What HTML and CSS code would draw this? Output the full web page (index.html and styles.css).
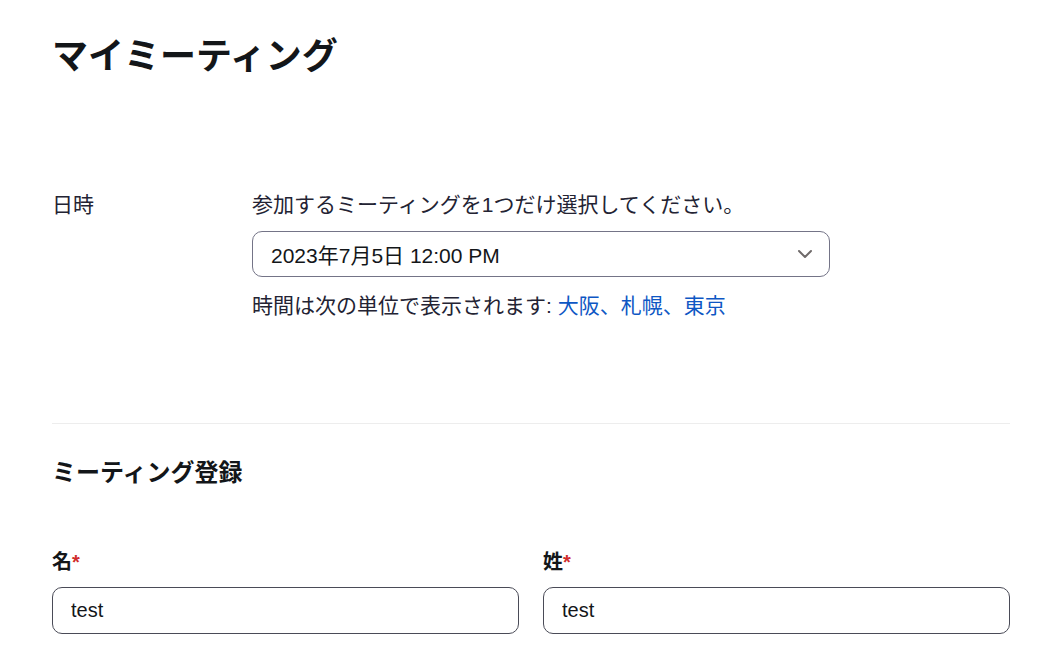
FILE: index.html
```html
<!DOCTYPE html>
<html lang="ja">
<head>
    <meta charset="UTF-8">
    <meta name="viewport" content="width=device-width, initial-scale=1.0">
    <title>マイミーティング</title>
    <link rel="stylesheet" href="styles.css">
</head>
<body>
    <div class="page">
        <h1 class="title">マイミーティング</h1>

        <div class="row">
            <div class="row-label">日時</div>
            <div class="row-body">
                <p class="hint">参加するミーティングを1つだけ選択してください。</p>
                <div class="select">
                    <span>2023年7月5日 12:00 PM</span>
                    <svg class="chevron" width="16" height="10" viewBox="0 0 16 10">
                        <path d="M2 2 L8 8 L14 2" fill="none" stroke="#6f6a6a" stroke-width="2" stroke-linecap="round" stroke-linejoin="round"/>
                    </svg>
                </div>
                <p class="tz">時間は次の単位で表示されます: <a href="#">大阪、札幌、東京</a></p>
            </div>
        </div>

        <hr class="divider">

        <h2 class="section">ミーティング登録</h2>

        <div class="fields">
            <div class="field">
                <label>名<span class="req">*</span></label>
                <input type="text" value="test">
            </div>
            <div class="field">
                <label>姓<span class="req">*</span></label>
                <input type="text" value="test">
            </div>
        </div>
    </div>
</body>
</html>
```

FILE: styles.css
```css
body {
    margin: 0;
    font-family: "Liberation Sans", "Noto Sans CJK JP", sans-serif;
    color: #232333;
    background: #fff;
}
.page {
    width: 958px;
    padding: 0 52px;
}
.title {
    font-size: 36px;
    font-weight: bold;
    margin: 32px 0 0;
    line-height: 50px;
    color: #131619;
}
.row {
    display: flex;
    margin-top: 108px;
}
.row-label {
    width: 200px;
    font-size: 21px;
    line-height: 30px;
}
.row-body {
    flex: 1;
}
.hint {
    margin: 0;
    font-size: 21px;
    line-height: 30px;
}
.select {
    height: 44px;
    margin-top: 11px;
    border: 1px solid #747487;
    border-radius: 10px;
    display: flex;
    align-items: center;
    justify-content: space-between;
    padding: 0 16px 0 18px;
    width: 542px;
    font-size: 21px;
    color: #131619;
}
.tz {
    margin: 14px 0 0;
    font-size: 21px;
    line-height: 30px;
}
.tz a {
    color: #0e57c4;
    text-decoration: none;
}
.divider {
    border: none;
    border-top: 1px solid #ededed;
    margin: 102px 0 0;
}
.section {
    font-size: 24px;
    font-weight: bold;
    margin: 34px 0 0;
    line-height: 30px;
    color: #131619;
}
.fields {
    display: flex;
    gap: 24px;
    margin-top: 60px;
}
.field {
    flex: 1;
    display: flex;
    flex-direction: column;
}
.field label {
    font-size: 20px;
    font-weight: bold;
    line-height: 28px;
    color: #131619;
}
.req {
    color: #d02c2c;
}
.field input {
    margin-top: 11px;
    height: 45px;
    border: 1px solid #4a4b57;
    border-radius: 10px;
    padding: 0 18px;
    font-family: "Liberation Sans", "Noto Sans CJK JP", sans-serif;
    font-size: 20px;
    color: #131619;
    outline: none;
}
```
